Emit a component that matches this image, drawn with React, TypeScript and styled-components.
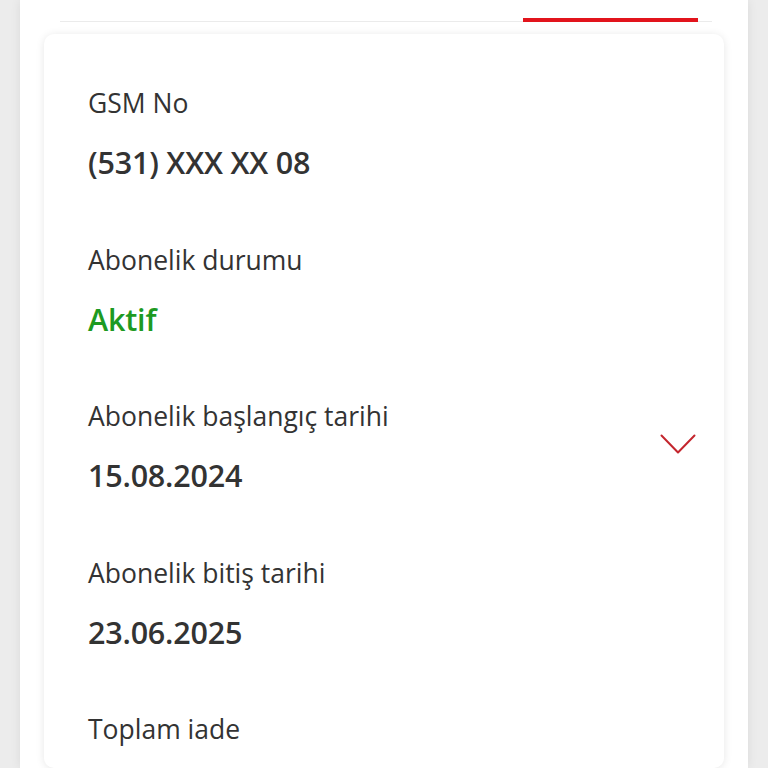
import React from "react";
import styled, { createGlobalStyle } from "styled-components";

const GlobalStyle = createGlobalStyle`
  html, body {
    margin: 0;
    padding: 0;
    background: #ececec;
    font-family: "Open Sans", "Noto Sans", sans-serif;
    color: #333333;
  }
  #root {
    height: 768px;
    overflow: hidden;
  }
`;

type Item = {
  label: string;
  value: string;
  status?: boolean;
  expandable?: boolean;
};

const items: Item[] = [
  { label: "GSM No", value: "(531) XXX XX 08" },
  { label: "Abonelik durumu", value: "Aktif", status: true },
  { label: "Abonelik başlangıç tarihi", value: "15.08.2024", expandable: true },
  { label: "Abonelik bitiş tarihi", value: "23.06.2025" },
  { label: "Toplam iade", value: "" },
];

export default function App() {
  return (
    <>
      <GlobalStyle />
      <Panel>
        <TabBar>
          <Tab />
          <Tab active />
        </TabBar>
        <Card>
          {items.map((item) => (
            <Row key={item.label}>
              <Texts>
                <Label>{item.label}</Label>
                {item.value && <Value status={item.status}>{item.value}</Value>}
              </Texts>
              {item.expandable && (
                <Chevron viewBox="0 0 36 20" fill="none">
                  <path
                    d="M1.5 1.5 L18 18.5 L34.5 1.5"
                    stroke="#c4262e"
                    strokeWidth="2"
                    strokeLinecap="round"
                    strokeLinejoin="round"
                  />
                </Chevron>
              )}
            </Row>
          ))}
        </Card>
      </Panel>
    </>
  );
}

const Panel = styled.div`
  margin: 0 20px;
  height: 768px;
  background: #ffffff;
  box-shadow: 0 0 10px rgba(0, 0, 0, 0.08);
  display: flex;
  flex-direction: column;
`;

const TabBar = styled.div`
  display: flex;
  margin: 0 36px 0 40px;
  height: 21px;
  border-bottom: 1px solid #ebebeb;
`;

const Tab = styled.div<{ active?: boolean }>`
  flex: ${(p) => (p.active ? "0 0 175px" : "1")};
  margin-right: ${(p) => (p.active ? "14px" : "0")};
  border-bottom: ${(p) => (p.active ? "4px solid #e2141c" : "none")};
  margin-bottom: ${(p) => (p.active ? "-1px" : "0")};
`;

const Card = styled.div`
  margin: 12px 24px 0;
  padding: 51px 28px 0 44px;
  background: #ffffff;
  border-radius: 10px;
  box-shadow: 0 1px 8px rgba(0, 0, 0, 0.1);
  display: flex;
  flex-direction: column;
  gap: 61.5px;
  flex: 1;
`;

const Row = styled.div`
  display: flex;
  align-items: center;
  justify-content: space-between;
`;

const Texts = styled.div`
  display: flex;
  flex-direction: column;
  gap: 23px;
`;

const Label = styled.div`
  font-size: 26.5px;
  line-height: 36px;
  color: #333333;
`;

const Value = styled.div<{ status?: boolean }>`
  font-size: 30.5px;
  line-height: 36px;
  font-weight: 600;
  letter-spacing: -0.2px;
  color: ${(p) => (p.status ? "#1d9a22" : "#333333")};
`;

const Chevron = styled.svg`
  width: 36px;
  height: 20px;
  flex: 0 0 auto;
  margin-bottom: 3px;
`;
